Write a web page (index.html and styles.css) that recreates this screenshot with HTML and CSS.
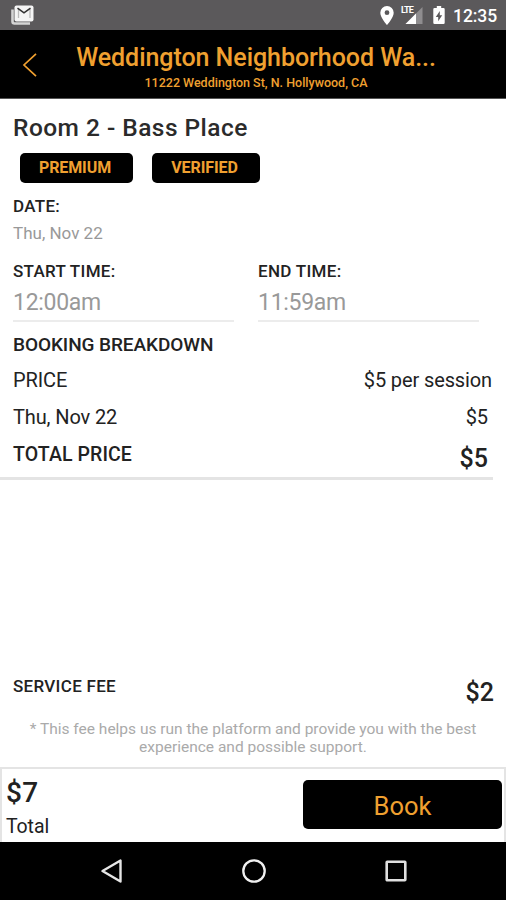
FILE: index.html
```html
<!DOCTYPE html>
<html lang="en">
<head>
<meta charset="utf-8">
<title>Booking</title>
<link rel="stylesheet" href="styles.css">
</head>
<body>
<div class="screen">
  <div class="status">
    <svg class="mail" width="26" height="22" viewBox="0 0 26 22">
      <path d="M2.500 5.500V17.500Q2.500 19.500 4.500 19.500H20" fill="none" stroke="#d4d4d4" stroke-width="2.600"/>
      <rect x="4.500" y="1.500" width="19" height="16" rx="2" fill="#f5f5f5"/>
      <path d="M8.500 14V5M20 5v9" fill="none" stroke="#bbb" stroke-width="1.300"/>
      <path d="M7.500 4.200l6.500 4.600 6.500-4.600" fill="none" stroke="#333" stroke-width="1.600"/>
    </svg>
    <div class="status-right">
      <svg class="pin" width="14" height="19" viewBox="0 0 14 19"><path fill="#fff" fill-rule="evenodd" d="M7 0a6.700 6.700 0 0 0-6.700 6.700C.3 11.700 7 19 7 19s6.700-7.300 6.700-12.300A6.700 6.700 0 0 0 7 0zm0 4.300a2.400 2.400 0 1 1 0 4.800 2.400 2.400 0 0 1 0-4.800z"/></svg>
      <span class="signal"><svg width="22" height="19" viewBox="0 0 22 19"><path fill="#8f8d8f" d="M21.500 1v17H4.500z"/><path fill="#fff" d="M15 7.500V18H4.500z"/></svg><span class="lte">LTE</span></span>
      <svg class="battery" width="12" height="18" viewBox="0 0 12 18"><path fill="#fff" fill-rule="evenodd" d="M3.800 0h4.400v2H10.500q1.200 0 1.200 1.200V16.800q0 1.200-1.200 1.200H1.500Q.3 18 .3 16.800V3.200Q.3 2 1.500 2H3.800zM6.800 5L2.800 11h2.400v4.300l4-6H6.800z"/></svg>
      <span class="clock">12:35</span>
    </div>
  </div>
  <header class="header">
    <svg class="back" width="16" height="26" viewBox="0 0 16 26"><path d="M14 1.800L2 13l12 11.200" fill="none" stroke="#f0a030" stroke-width="1.700"/></svg>
    <div class="titles">
      <div class="title">Weddington Neighborhood Wa...</div>
      <div class="address">11222 Weddington St, N. Hollywood, CA</div>
    </div>
  </header>
  <main class="content">
    <h1 class="room">Room 2 - Bass Place</h1>
    <div class="badges"><span class="badge premium">PREMIUM</span><span class="badge verified">VERIFIED</span></div>
    <div class="label date-label">DATE:</div>
    <div class="date">Thu, Nov 22</div>
    <div class="times">
      <div class="time"><div class="label start">START TIME:</div><div class="time-value">12:00am</div></div>
      <div class="time"><div class="label end">END TIME:</div><div class="time-value">11:59am</div></div>
    </div>
    <h2 class="breakdown">BOOKING BREAKDOWN</h2>
    <div class="row price"><span>PRICE</span><span class="per">$5 per session</span></div>
    <div class="row day"><span>Thu, Nov 22</span><span>$5</span></div>
    <div class="total-row"><span class="total-label">TOTAL PRICE</span><span class="amount">$5</span></div>
    <div class="fee-row"><span class="label">SERVICE FEE</span><span class="amount fee">$2</span></div>
    <p class="note">* This fee helps us run the platform and provide you with the best<br>experience and possible support.</p>
  </main>
  <footer class="footer">
    <div><div class="sum">$7</div><div class="sum-label">Total</div></div>
    <button class="book">Book</button>
  </footer>
  <nav class="nav">
    <svg width="24" height="26" viewBox="0 0 24 26"><path d="M20.500 2.500v21L2.500 13z" fill="none" stroke="#e6e6e6" stroke-width="2.400" stroke-linejoin="round"/></svg>
    <svg class="home" width="26" height="26" viewBox="0 0 26 26"><circle cx="13" cy="13" r="10.700" fill="none" stroke="#f0f0f0" stroke-width="2.300"/></svg>
    <svg width="22" height="26" viewBox="0 0 22 26"><rect x="1.700" y="3.700" width="18.600" height="18.600" rx=".5" fill="none" stroke="#e0e0e0" stroke-width="2.600"/></svg>
  </nav>
</div>
</body>
</html>
```
FILE: styles.css
```css
* { box-sizing: border-box; }
body { margin: 0; font-family: Roboto, "Liberation Sans", sans-serif; color: #222; background: #fff; }
h1, h2, p { margin: 0; }
svg { display: block; flex: none; }
.screen { width: 506px; height: 900px; display: flex; flex-direction: column; overflow: hidden; white-space: nowrap; }

.status { height: 30px; flex: none; background: #5b595b; display: flex; justify-content: space-between; padding: 0 9px 0 10px; }
.mail { margin-top: 4px; }
.status-right { display: flex; align-items: flex-start; color: #fff; }
.pin { margin-top: 6px; }
.signal { position: relative; margin: 6px 0 0 7px; }
.lte { position: absolute; left: 0; top: 0; font-size: 9px; line-height: 9px; font-weight: 700; letter-spacing: -.9px; }
.battery { margin: 6px 0 0 10px; }
.clock { font-size: 17.500px; font-weight: 500; line-height: 32px; margin-left: 8px; letter-spacing: -.1px; }

.header { height: 69px; flex: none; background: #000; color: #f0a030; display: flex; border-bottom: 1px solid #555; }
.back { margin: 22px 0 0 22px; }
.titles { flex: 1; padding-right: 32px; text-align: center; }
.title { font-size: 25px; line-height: 30px; margin-top: 13px; font-weight: 500; letter-spacing: -.05px; }
.address { font-size: 12.500px; line-height: 16px; margin-top: 2px; font-weight: 500; }

.content { flex: 1; display: flex; flex-direction: column; padding: 15px 13px 0; }
.room { font-size: 24.500px; line-height: 28px; font-weight: 500; letter-spacing: .46px; color: #2b2b2b; }
.badges { display: flex; gap: 19px; margin: 11px 0 0 7px; }
.badge { height: 30px; border-radius: 5px; background: #000; color: #f0a030; font-size: 16px; font-weight: 700; line-height: 29px; text-align: center; letter-spacing: -.1px; padding-right: 3px; }
.premium { width: 113px; }
.verified { width: 108px; }
.label { font-size: 17px; line-height: 20px; font-weight: 500; letter-spacing: .3px; }
.date-label { margin-top: 13px; }
.date { margin-top: 7px; font-size: 17px; line-height: 20px; color: #999; }
.times { display: flex; gap: 24px; margin-top: 18px; }
.time { width: 221px; border-bottom: 2px solid #ececec; padding-bottom: 3px; }
.time-value { margin-top: 8px; font-size: 23px; line-height: 28px; color: #999; letter-spacing: -.3px; }
.breakdown { margin-top: 11px; font-size: 19px; line-height: 24px; font-weight: 500; letter-spacing: -.08px; }
.row { display: flex; justify-content: space-between; font-size: 20px; line-height: 24px; letter-spacing: -.12px; }
.price { margin-top: 11px; }
.per { margin-right: 1px; }
.day { margin-top: 13px; padding-right: 5px; }
.total-row { display: flex; justify-content: space-between; margin: 12px 0 0 -13px; padding: 2px 5px 0 13px; height: 39px; border-bottom: 3px solid #e4e4e4; }
.total-label { font-size: 19.500px; line-height: 24px; font-weight: 500; letter-spacing: .1px; }
.amount { font-size: 25px; line-height: 28px; margin-top: 2px; font-weight: 500; }
.fee-row { display: flex; justify-content: space-between; margin: auto -1px 0 0; height: 44px; }
.fee { margin-top: 3px; }
.note { font-size: 15.500px; line-height: 18.400px; height: 47px; text-align: center; color: #aaa; }

.footer { height: 75px; flex: none; display: flex; justify-content: space-between; border: 2px solid #e4e4e4; border-bottom: 0; padding: 0 2px 0 4px; }
.sum { margin-top: 8px; font-size: 28px; line-height: 32px; font-weight: 500; letter-spacing: .3px; }
.sum-label { margin-top: 6px; font-size: 19.500px; line-height: 24px; letter-spacing: -.1px; }
.book { margin: 11px 0 0; width: 199px; height: 49px; border: 0; border-radius: 5px; background: #000; color: #f0a030; font-family: inherit; font-size: 25.500px; line-height: 48px; padding: 2px 0 0; }

.nav { flex: none; height: 58px; background: #000; display: flex; justify-content: space-between; padding: 16px 99px 0 100px; }
.home { margin-right: 2px; }
```
